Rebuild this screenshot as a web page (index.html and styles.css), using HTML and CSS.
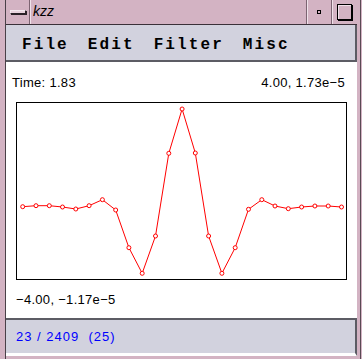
FILE: index.html
```html
<!DOCTYPE html>
<html lang="en">
<head>
    <meta charset="UTF-8">
    <title>kzz</title>
    <link rel="stylesheet" href="styles.css">
</head>
<body>
    <div class="window">
        <!-- title bar -->
        <div class="titlebar">
            <div class="tb-btn menu-btn"><span class="bar"></span></div>
            <div class="title">kzz</div>
            <div class="tb-btn min-btn"><span class="dot"></span></div>
            <div class="tb-btn max-btn"><span class="box"></span></div>
        </div>

        <!-- menus -->
        <div class="menubar">
            <span class="menu">File</span>
            <span class="menu">Edit</span>
            <span class="menu">Filter</span>
            <span class="menu">Misc</span>
        </div>

        <!-- plot area -->
        <div class="content">
            <div class="readout top">
                <span>Time: 1.83</span>
                <span>4.00, 1.73e&minus;5</span>
            </div>
            <div class="plot">
                <svg width="329" height="176" viewBox="17 103 329 176" xmlns="http://www.w3.org/2000/svg">
                    <polyline class="trace" points="22.7,206.7 36,205.7 49.3,205.7 62.5,207 75.8,209 89.1,205.7 102.4,199.7 115.7,210 128.9,247.7 142.2,273.3 155.5,236 168.8,153.3 182.1,109 195.3,153 208.6,236 221.9,273.3 235.2,247.7 248.5,209.3 261.8,199.7 275,206 288.3,208.7 301.6,207 314.9,206 328.2,206 341.5,207"/>
                    <g class="marks"></g>
                </svg>
            </div>
            <div class="readout bottom">&minus;4.00, &minus;1.17e&minus;5</div>
        </div>

        <!-- status -->
        <div class="statusbar">23 / 2409  (25)</div>
    </div>

    <script>
        // sample markers on each point of the trace
        const trace = document.querySelector('.trace');
        const marks = document.querySelector('.marks');
        trace.getAttribute('points').split(' ').forEach(p => {
            const [x, y] = p.split(',');
            const c = document.createElementNS('http://www.w3.org/2000/svg', 'circle');
            c.setAttribute('cx', x);
            c.setAttribute('cy', y);
            c.setAttribute('r', 2);
            marks.appendChild(c);
        });
    </script>
</body>
</html>
```

FILE: styles.css
```css
body {
    margin: 0;
    padding: 0;
    width: 362px;
    height: 359px;
    overflow: hidden;
    background: #d3b3c3;
    font-family: "Liberation Sans", Arial, sans-serif;
}

.window {
    margin-left: 5px;
    width: 351px;
    height: 359px;
    border-left: 1px solid #4a4048;
    box-shadow: 3px 0 0 #d3b3c3, 4px 0 0 #5a4a54;
}

.titlebar {
    display: flex;
    height: 24px;
    border-bottom: 1px solid #3a3038;
}

.tb-btn {
    display: flex;
    flex: none;
    align-items: center;
    justify-content: center;
}

.menu-btn {
    width: 23px;
    min-width: 23px;
    border-right: 1px solid #7c6472;
}

.menu-btn .bar {
    display: block;
    width: 14px;
    height: 2px;
    background: #e8d4de;
    border: 1px solid #2a2228;
    border-top-color: #f4eaf0;
    border-left-color: #f4eaf0;
    box-shadow: 1px 1px 0 #2a2228;
}

.title {
    flex: 1;
    padding-left: 3px;
    font-size: 14px;
    font-style: italic;
    line-height: 22px;
    color: #000;
    box-shadow: inset 1px 0 0 #f0e2ea;
}

.min-btn {
    width: 24px;
    border-left: 1px solid #7c6472;
    box-shadow: inset 1px 0 0 #f0e2ea;
}

.min-btn .dot {
    display: block;
    width: 2px;
    height: 2px;
    border: 1px solid #000;
    background: #d3b3c3;
}

.max-btn {
    width: 25px;
    border-left: 1px solid #7c6472;
    box-shadow: inset 1px 0 0 #f0e2ea;
}

.max-btn .box {
    display: block;
    width: 13px;
    height: 14px;
    border: 1px solid #000;
    box-shadow: 1px 1px 0 #000, inset 1px 1px 0 #f0e2ea;
}

.menubar {
    display: flex;
    gap: 19px;
    height: 24px;
    padding: 11px 0 0 16px;
    background: #d2d2de;
    border-right: 2px solid #5c5c64;
    border-bottom: 2px solid #5c5c64;
}

.menu {
    font-family: "Liberation Mono", "Courier New", monospace;
    font-weight: bold;
    font-size: 16px;
    line-height: 18px;
    letter-spacing: 2.1px;
    color: #000;
}

.content {
    height: 256px;
    padding-top: 13px;
    box-sizing: border-box;
    background: #fff;
}

.readout {
    font-size: 13px;
    line-height: 15px;
    color: #000;
}

.readout.top {
    display: flex;
    justify-content: space-between;
    padding: 0 12px 0 6px;
    letter-spacing: 0.3px;
}

.readout.bottom {
    padding-left: 10px;
    letter-spacing: 0.3px;
}

.plot {
    width: 329px;
    height: 176px;
    margin: 12px 0 12px 10px;
    border: 1px solid #000;
}

.plot svg {
    display: block;
}

.trace {
    fill: none;
    stroke: #ff0000;
    stroke-width: 1;
}

.marks circle {
    fill: #fff;
    stroke: #ff0000;
    stroke-width: 1;
}

.statusbar {
    height: 24px;
    padding: 9px 0 0 10px;
    background: #d2d2de;
    border-top: 2px solid #5c5c64;
    border-right: 2px solid #5c5c64;
    border-bottom: 3px solid #fff;
    font-size: 13px;
    line-height: 15px;
    letter-spacing: 1px;
    color: #0000ff;
    white-space: pre;
}
```
